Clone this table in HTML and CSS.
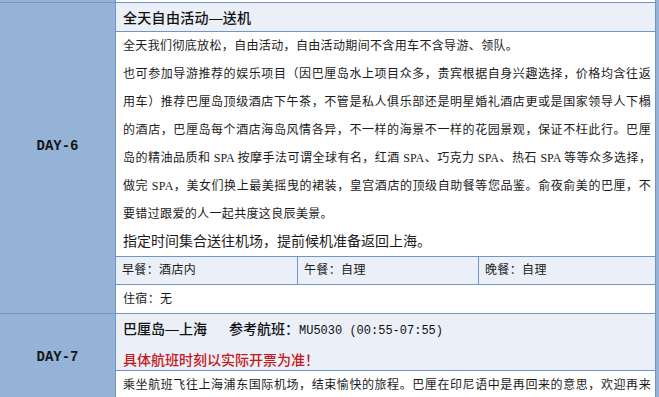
FILE: index.html
```html
<!DOCTYPE html>
<html lang="zh-CN">
<head>
<meta charset="utf-8">
<title>行程 DAY-6 / DAY-7</title>
<link rel="stylesheet" href="styles.css">
</head>
<body>
<div class="sheet">
  <div class="row prev">
    <div class="side"></div>
    <div class="main"></div>
  </div>

  <div class="row">
    <div class="side side-d6"><span class="day">DAY-6</span></div>
    <div class="main">
      <div class="head"><h2 class="title">全天自由活动<span class="dash">—</span>送机</h2></div>
      <p class="txt">全天我们彻底放松，自由活动，自由活动期间不含用车不含导游、领队。</p>
      <p class="txt">
        <span class="ln">也可参加导游推荐的娱乐项目（因巴厘岛水上项目众多，贵宾根据自身兴趣选择，价格均含往返</span>
        <span class="ln">用车）推荐巴厘岛顶级酒店下午茶，不管是私人俱乐部还是明星婚礼酒店更或是国家领导人下榻</span>
        <span class="ln">的酒店，巴厘岛每个酒店海岛风情各异，不一样的海景不一样的花园景观，保证不枉此行。巴厘</span>
        <span class="ln tight">岛的精油品质和 SPA 按摩手法可谓全球有名，红酒 SPA、巧克力 SPA、热石 SPA 等等众多选择，</span>
        <span class="ln">做完 SPA，美女们换上最美摇曳的裙装，皇宫酒店的顶级自助餐等您品鉴。俞夜俞美的巴厘，不</span>
        <span class="last">要错过跟爱的人一起共度这良辰美景。</span>
      </p>
      <p class="txt big">指定时间集合送往机场，提前候机准备返回上海。</p>
      <div class="meals">
        <div class="meal">早餐：酒店内</div>
        <div class="meal">午餐：自理</div>
        <div class="meal">晚餐：自理</div>
      </div>
      <div class="stay">住宿：无</div>
    </div>
  </div>

  <div class="row">
    <div class="side side-d7"><span class="day">DAY-7</span></div>
    <div class="main">
      <div class="head head-tall">
        <p class="hline">巴厘岛<span class="dash">—</span>上海<span class="flight">参考航班：<span class="mono">MU5030 (00:55-07:55)</span></span></p>
        <p class="hline warn">具体航班时刻以实际开票为准！</p>
      </div>
      <p class="txt">
        <span class="ln">乘坐航班飞往上海浦东国际机场，结束愉快的旅程。巴厘在印尼语中是再回来的意思，欢迎再来</span>
        <span class="last">巴厘岛！</span>
      </p>
    </div>
  </div>
</div>
</body>
</html>
```

FILE: styles.css
```css
* {
  box-sizing: border-box;
}

body {
  margin: 0;
  background: #95b3d7;
  font-family: "Liberation Serif", "Noto Sans CJK SC", serif;
  color: #1b1b1b;
}

.sheet {
  width: 656px;
}

.row {
  display: grid;
  grid-template-columns: 116px 540px;
}

.prev {
  height: 3px;
}

.side {
  background: #95b3d7;
  border-right: 1px solid #7195c8;
  border-bottom: 1px solid #7195c8;
  display: flex;
  justify-content: center;
}

.side-d6 {
  align-items: center;
  padding-bottom: 25px;
}

.side-d7 {
  align-items: flex-start;
  padding-top: 29px;
}

.day {
  font-family: "Liberation Mono", monospace;
  font-size: 14px;
  font-weight: bold;
  line-height: 28px;
  color: #161616;
}

.main {
  background: #fff;
  border-right: 1px solid #7195c8;
  border-bottom: 1px solid #7195c8;
}

.head {
  background: #eaeff8;
  border-bottom: 1px solid #7195c8;
  height: 29px;
  padding: 0 7px;
}

.head-tall {
  height: 57px;
}

.title {
  margin: 0;
  font-family: "Noto Sans CJK SC", sans-serif;
  font-weight: 500;
  font-size: 14px;
  letter-spacing: 0.3px;
  line-height: 28px;
  color: #111;
}

.dash {
  display: inline-block;
  width: 14px;
  text-align: center;
  transform: scaleX(1.2);
}

.hline {
  margin: 0;
  font-family: "Noto Sans CJK SC", sans-serif;
  font-weight: 500;
  font-size: 14px;
  line-height: 28px;
  color: #111;
}

.flight {
  margin-left: 22px;
}

.mono {
  font-family: "Liberation Mono", monospace;
  font-size: 12px;
  font-weight: normal;
}

.warn {
  color: #c41a1a;
}

.txt {
  margin: 0;
  padding: 0 4px 0 7px;
  font-size: 12px;
  letter-spacing: 0.35px;
  line-height: 28px;
}

.ln {
  display: block;
  white-space: nowrap;
  text-align: justify;
  text-align-last: justify;
}

.tight {
  letter-spacing: 0;
}

.last {
  display: block;
}

.big {
  font-size: 14px;
  letter-spacing: 0;
}

.meals {
  display: grid;
  grid-template-columns: 181px 181px 1fr;
  background: #eaeff8;
  border-top: 1px solid #7195c8;
  border-bottom: 1px solid #7195c8;
  height: 29px;
}

.meal {
  padding-left: 6px;
  font-size: 12px;
  line-height: 27px;
  letter-spacing: 0.35px;
}

.meal + .meal {
  border-left: 1px solid #7195c8;
}

.stay {
  padding-left: 7px;
  font-size: 12px;
  line-height: 28px;
  letter-spacing: 0.35px;
}
```
